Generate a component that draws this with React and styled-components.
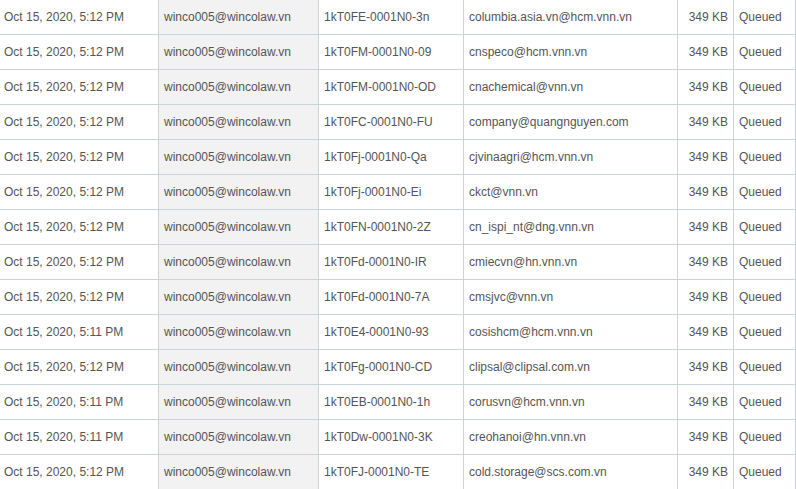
import React from "react";
import styled, { createGlobalStyle } from "styled-components";

const rows = [
  ["Oct 15, 2020, 5:12 PM", "1kT0FE-0001N0-3n", "columbia.asia.vn@hcm.vnn.vn"],
  ["Oct 15, 2020, 5:12 PM", "1kT0FM-0001N0-09", "cnspeco@hcm.vnn.vn"],
  ["Oct 15, 2020, 5:12 PM", "1kT0FM-0001N0-OD", "cnachemical@vnn.vn"],
  ["Oct 15, 2020, 5:12 PM", "1kT0FC-0001N0-FU", "company@quangnguyen.com"],
  ["Oct 15, 2020, 5:12 PM", "1kT0Fj-0001N0-Qa", "cjvinaagri@hcm.vnn.vn"],
  ["Oct 15, 2020, 5:12 PM", "1kT0Fj-0001N0-Ei", "ckct@vnn.vn"],
  ["Oct 15, 2020, 5:12 PM", "1kT0FN-0001N0-2Z", "cn_ispi_nt@dng.vnn.vn"],
  ["Oct 15, 2020, 5:12 PM", "1kT0Fd-0001N0-IR", "cmiecvn@hn.vnn.vn"],
  ["Oct 15, 2020, 5:12 PM", "1kT0Fd-0001N0-7A", "cmsjvc@vnn.vn"],
  ["Oct 15, 2020, 5:11 PM", "1kT0E4-0001N0-93", "cosishcm@hcm.vnn.vn"],
  ["Oct 15, 2020, 5:12 PM", "1kT0Fg-0001N0-CD", "clipsal@clipsal.com.vn"],
  ["Oct 15, 2020, 5:11 PM", "1kT0EB-0001N0-1h", "corusvn@hcm.vnn.vn"],
  ["Oct 15, 2020, 5:11 PM", "1kT0Dw-0001N0-3K", "creohanoi@hn.vnn.vn"],
  ["Oct 15, 2020, 5:12 PM", "1kT0FJ-0001N0-TE", "cold.storage@scs.com.vn"],
];

const Global = createGlobalStyle`
  body {
    margin: 0;
    background: #fff;
    font-family: "Liberation Sans", Arial, sans-serif;
    overflow: hidden;
  }
`;

const Table = styled.table`
  width: 796px;
  table-layout: fixed;
  border-collapse: separate;
  border-spacing: 0;
  font-size: 12px;
  color: #555;
`;

const Col = styled.col`
  width: ${(p) => p.$w}px;
`;

const Cell = styled.td`
  box-sizing: border-box;
  height: 35px;
  padding: 0 5px;
  border-right: 1px solid #c9d4d9;
  border-bottom: 1px solid #c9d4d9;
  vertical-align: middle;
  white-space: nowrap;
  overflow: hidden;
  text-align: ${(p) => (p.$right ? "right" : "left")};
  background: ${(p) => (p.$shade ? "#f2f2f2" : "#fff")};

  &:first-child {
    padding-left: 4px;
  }
`;

const MailLog = () => {
  return (
    <Table>
      <colgroup>
        <Col $w={159} />
        <Col $w={160} />
        <Col $w={145} />
        <Col $w={214} />
        <Col $w={56} />
        <Col $w={62} />
      </colgroup>
      <tbody>
        {rows.map(([date, id, to], i) => (
          <tr key={i}>
            <Cell>{date}</Cell>
            <Cell $shade>winco005@wincolaw.vn</Cell>
            <Cell>{id}</Cell>
            <Cell>{to}</Cell>
            <Cell $right>349 KB</Cell>
            <Cell>Queued</Cell>
          </tr>
        ))}
      </tbody>
    </Table>
  );
};

export default function App() {
  return (
    <>
      <Global />
      <MailLog />
    </>
  );
}
